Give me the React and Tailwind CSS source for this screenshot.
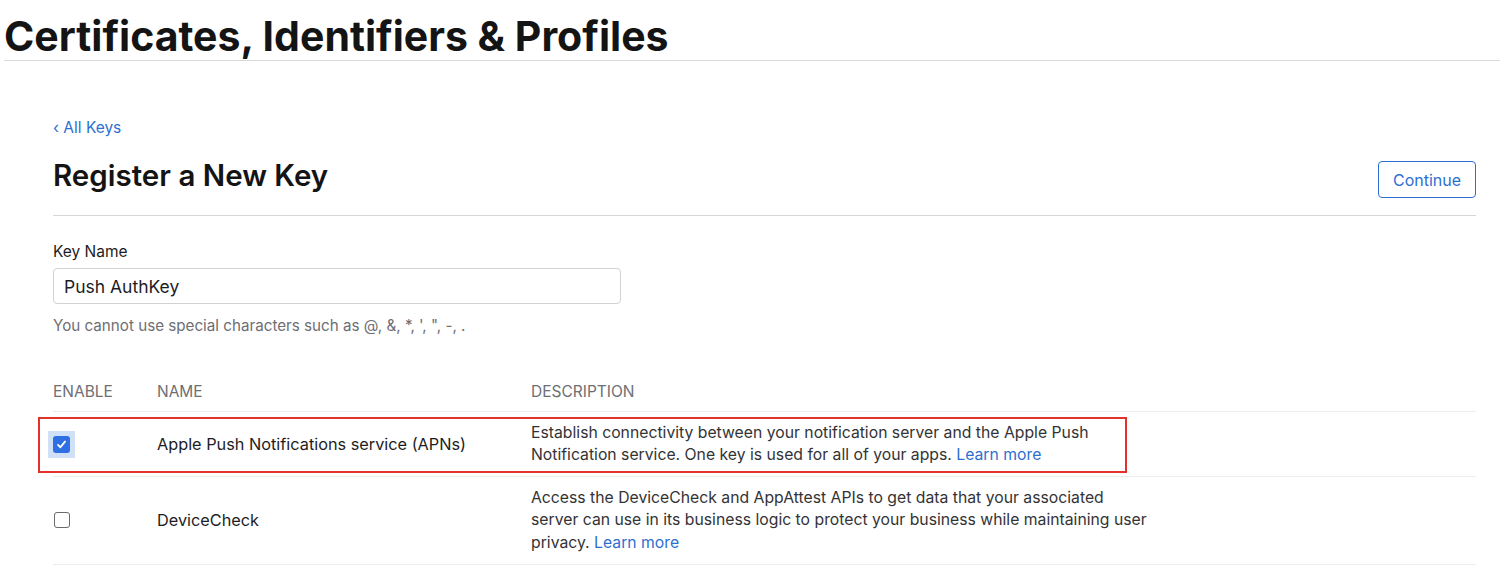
import { useState } from 'react';

const rows = [
  {
    name: 'Apple Push Notifications service (APNs)',
    desc: [
      'Establish connectivity between your notification server and the Apple Push',
      'Notification service. One key is used for all of your apps.',
    ],
    checked: true,
    flagged: true,
  },
  {
    name: 'DeviceCheck',
    desc: [
      'Access the DeviceCheck and AppAttest APIs to get data that your associated',
      'server can use in its business logic to protect your business while maintaining user',
      'privacy.',
    ],
    checked: false,
  },
];

function Checkbox({ checked, onChange }) {
  return (
    <button
      onClick={onChange}
      className={`flex h-[27px] w-[27px] items-center justify-center ${checked ? 'bg-[#cfe0f7]' : ''}`}
    >
      {checked ? (
        <span className="flex h-[17px] w-[17px] items-center justify-center rounded-[3px] bg-[#2f6fe4]">
          <svg viewBox="0 0 12 12" className="h-[11px] w-[11px]">
            <path d="M2.2 6.4 L4.8 9 L9.8 2.8" fill="none" stroke="white" strokeWidth="2" strokeLinecap="round" strokeLinejoin="round" />
          </svg>
        </span>
      ) : (
        <span className="h-[16px] w-[16px] rounded-[3px] border border-[#6b6b6b] bg-white" />
      )}
    </button>
  );
}

export default function App() {
  const [checks, setChecks] = useState(rows.map((r) => r.checked));

  return (
    <div className="min-h-[572px] bg-white text-[#1d1d1f] font-['Inter','Liberation_Sans',sans-serif]">
      <div className="ml-[4px] h-[61px] border-b border-[#d9d9d9] pt-[10px]">
        <h1 className="text-[41px] font-bold leading-[52px] text-[#141414]">
          Certificates, Identifiers &amp; Profiles
        </h1>
      </div>

      <div className="ml-[53px] mr-[24px]">
        <div className="pt-[54px]">
          <a className="text-[15.5px] leading-[20px] text-[#2d6fd0]">‹ All Keys</a>
        </div>

        <div className="flex items-start justify-between border-b border-[#d6d6d6] pb-[17px] pt-[17px]">
          <h2 className="text-[29.5px] font-semibold leading-[38px] text-[#141414]">
            Register a New Key
          </h2>
          <button className="mt-[5px] h-[37px] w-[98px] rounded-[4px] border border-[#2d6fd0] text-[16px] text-[#2d6fd0]">
            Continue
          </button>
        </div>

        <div className="pt-[26px]">
          <label className="block text-[15.5px] leading-[20px] text-[#1d1d1f]">Key Name</label>
          <input
            defaultValue="Push AuthKey"
            className="mt-[6px] h-[36px] w-[568px] rounded-[4px] border border-[#d2d2d2] px-[10px] text-[17.5px] text-[#1d1d1f] outline-none"
          />
          <p className="mt-[12px] text-[15.2px] leading-[20px] text-[#6e6e73]">
            You cannot use special characters such as @, &amp;, *, ', ", -, .
          </p>
        </div>

        <div className="mt-[46px]">
          <div className="grid grid-cols-[104px_374px_1fr] border-b border-[#ececec] pb-[9px] text-[15.5px] leading-[20px] text-[#6e6e73]">
            <div>ENABLE</div>
            <div>NAME</div>
            <div>DESCRIPTION</div>
          </div>

          {rows.map((row, i) => (
            <div
              key={row.name}
              className="relative grid grid-cols-[104px_374px_660px] items-center border-b border-[#ececec] py-[9.5px]"
            >
              {row.flagged && (
                <div className="pointer-events-none absolute left-[-15px] top-[5px] bottom-[3px] w-[1089px] border-2 border-[#e3322b]" />
              )}
              <div className="ml-[-5px]">
                <Checkbox
                  checked={checks[i]}
                  onChange={() => setChecks(checks.map((c, j) => (j === i ? !c : c)))}
                />
              </div>
              <div className="text-[16.3px] leading-[22px] text-[#1d1d1f]">{row.name}</div>
              <div className="text-[15.75px] leading-[22.5px] text-[#333336]">
                {row.desc.map((line, k) => (
                  <div key={k}>
                    {line}
                    {k === row.desc.length - 1 && (
                      <>
                        {' '}
                        <a className="text-[#2d6fd0]">Learn more</a>
                      </>
                    )}
                  </div>
                ))}
              </div>
            </div>
          ))}
        </div>
      </div>
    </div>
  );
}
